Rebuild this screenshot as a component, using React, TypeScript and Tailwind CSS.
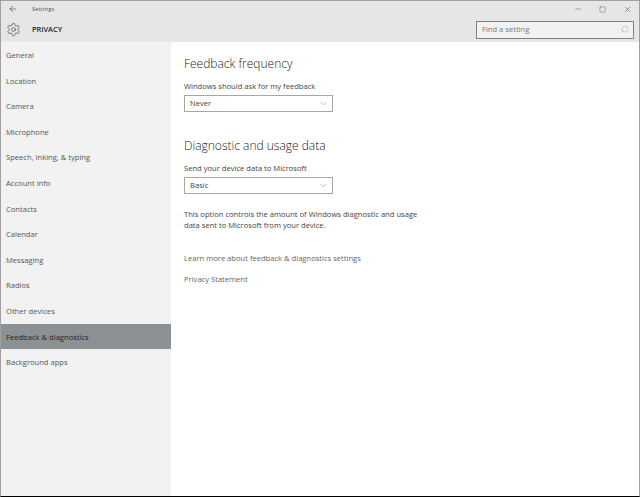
import { ArrowLeft, ChevronDown, Minus, Search, Settings, Square, X } from "lucide-react";

const items = [
  "General",
  "Location",
  "Camera",
  "Microphone",
  "Speech, inking, & typing",
  "Account info",
  "Contacts",
  "Calendar",
  "Messaging",
  "Radios",
  "Other devices",
  "Feedback & diagnostics",
  "Background apps",
];

function Select({ value }: { value: string }) {
  return (
    <div className="mt-[3px] flex h-[17px] w-[149px] items-center justify-between border border-[#a6a6a6] bg-white pl-[5px] pr-[3px] text-[7.6px] text-[#444]">
      <span>{value}</span>
      <ChevronDown size={11} strokeWidth={0.8} className="text-[#555]" />
    </div>
  );
}

export default function App() {
  return (
    <div className="flex h-[497px] w-[640px] flex-col overflow-hidden border-t border-l border-r border-b border-t-[#a0a0a0] border-l-[#a0a0a0] border-r-[#a0a0a0] border-b-black bg-white font-['Open_Sans',sans-serif] text-[#444]">
      <header className="h-[41px] shrink-0 bg-[#e6e6e6]">
        <div className="flex h-[16px] items-center">
          <ArrowLeft size={10} strokeWidth={1.2} className="ml-[7px] text-[#222]" />
          <span className="ml-[14px] text-[6px] text-[#555]">Settings</span>
          <div className="ml-auto flex items-center">
            <Minus size={8} strokeWidth={1.2} className="mr-[17px] text-[#333]" />
            <Square size={7} strokeWidth={1.2} className="mr-[17px] text-[#333]" />
            <X size={9} strokeWidth={1.2} className="mr-[7px] text-[#333]" />
          </div>
        </div>
        <div className="flex h-[25px] items-center">
          <Settings size={15} strokeWidth={1} className="ml-[5px] text-[#333]" />
          <span className="ml-[11px] text-[7.4px] font-semibold text-[#222]">PRIVACY</span>
          <div className="ml-auto mr-[5px] flex h-[18px] w-[158px] items-center justify-between border border-[#808080] bg-[#f2f2f2] pl-[5px] pr-[4px]">
            <span className="text-[7.6px] text-[#777]">Find a setting</span>
            <Search size={9} strokeWidth={0.9} className="-scale-x-100 text-[#888]" />
          </div>
        </div>
      </header>
      <div className="flex min-h-0 flex-1">
        <nav className="w-[170px] shrink-0 bg-[#f2f2f2]">
          {items.map((item) => (
            <div
              key={item}
              className={
                "flex h-[25.6px] items-center pl-[5px] pt-[2px] text-[7.6px] " +
                (item === "Feedback & diagnostics" ? "bg-[#8c9293] text-[#222]" : "text-[#555]")
              }
            >
              {item}
            </div>
          ))}
        </nav>
        <main className="flex-1 pl-[13px] pt-[13px]">
          <h2 className="text-[12px] font-light leading-[17px] text-[#222]">Feedback frequency</h2>
          <p className="mt-[8px] text-[7.6px] leading-[12px]">Windows should ask for my feedback</p>
          <Select value="Never" />
          <h2 className="mt-[25px] text-[12px] font-light leading-[17px] text-[#222]">Diagnostic and usage data</h2>
          <p className="mt-[8px] text-[7.6px] leading-[12px]">Send your device data to Microsoft</p>
          <Select value="Basic" />
          <p className="mt-[15px] w-[250px] text-[7.6px] leading-[11px]">
            This option controls the amount of Windows diagnostic and usage data sent to Microsoft from your device.
          </p>
          <p className="mt-[21px] text-[7.6px] leading-[12px] text-[#666]">Learn more about feedback &amp; diagnostics settings</p>
          <p className="mt-[9px] text-[7.6px] leading-[12px] text-[#666]">Privacy Statement</p>
        </main>
      </div>
    </div>
  );
}
